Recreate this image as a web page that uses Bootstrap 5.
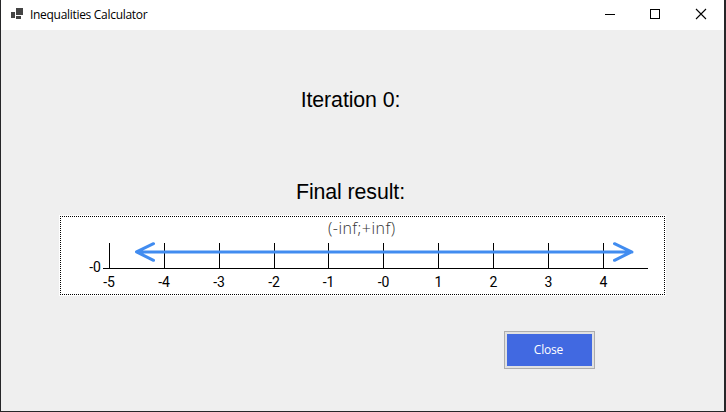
<!DOCTYPE html>
<html lang="en">
<head>
<meta charset="utf-8">
<title>Inequalities Calculator</title>
<link href="https://cdn.jsdelivr.net/npm/bootstrap@5.3.0/dist/css/bootstrap.min.css" rel="stylesheet">
<style>
  body { background: #262628; font-family: "Open Sans", sans-serif; color: #000; }
  .app-window { height: 411px; margin: 0 2px 0 1px; background: #efefef; }
  .title-bar { height: 30px; font-size: 12px; padding-left: 10px; }
  .title-text { margin-left: 6px; line-height: 30px; letter-spacing: -.3px; }
  .win-btn { width: 45.5px; height: 30px; }
  .win-btns { margin-right: 1px; }
  .step-heading { font: 21.33px/26px "Liberation Sans", Arial, sans-serif; width: 699px; letter-spacing: -.1px; }
  .step-one { padding-top: 57px; }
  .step-final { padding-top: 66px; }
  .chart-box { width: 607px; height: 81px; margin: 10px 0 0 58px; }
  .axis-labels { font: 14px Roboto, sans-serif; }
  .range-label { font: 300 16px "Open Sans", sans-serif; fill: #333; }
  .btn-close-form {
    width: 91px; height: 38px; margin: 35px 0 0 503px; padding: 0 2px 0 0;
    border: 1px solid #adadad; border-radius: 0; background: #4169e1;
    box-shadow: inset 0 0 0 2px #e1e1e1; color: #fff; font-size: 12px; letter-spacing: -.2px;
  }
  .btn-close-form:hover { background: #4169e1; color: #fff; border-color: #adadad; }
</style>
<script src="https://cdn.jsdelivr.net/npm/bootstrap@5.3.0/dist/js/bootstrap.bundle.min.js"></script>
</head>
<body class="overflow-hidden">
<div class="app-window d-flex flex-column">
  <header class="title-bar bg-white d-flex align-items-start flex-shrink-0">
    <svg width="13" height="30" shape-rendering="crispEdges" fill="#444"><path d="M0 12h4v6H0zM5 8h7v7H5zM5 16h5v3H5z"/></svg>
    <span class="title-text">Inequalities Calculator</span>
    <div class="win-btns d-flex ms-auto">
      <svg class="win-btn" viewBox="0 0 45.5 30"><path d="M18 14.5h10" stroke="#000" shape-rendering="crispEdges"/></svg>
      <svg class="win-btn" viewBox="0 0 45.5 30"><path d="M18.5 9.5h9v9h-9z" fill="none" stroke="#000" shape-rendering="crispEdges"/></svg>
      <svg class="win-btn" viewBox="0 0 45.5 30"><path d="M18 9l10 10M28 9l-10 10" stroke="#000" stroke-width="1.1"/></svg>
    </div>
  </header>
  <main>
    <h1 class="step-heading step-one text-center mb-0">Iteration 0:</h1>
    <h2 class="step-heading step-final text-center mb-0">Final result:</h2>
    <svg class="chart-box d-block" viewBox="59 215 607 81">
      <path fill="#fff" d="M59 215h607v81H59z"/>
      <g stroke="#000" stroke-dasharray="1 1" fill="none" shape-rendering="crispEdges">
        <path d="M60 216.5h605M60 294.5h605M60.5 216v79M664.5 216v79"/>
      </g>
      <path stroke="#000" fill="none" shape-rendering="crispEdges" d="M103 268.5h545M109.5 243v26M164.5 243v26M219.5 243v26M274.5 243v26M328.5 243v26M383.5 243v26M438.5 243v26M493.5 243v26M548.5 243v26M603.5 243v26"/>
      <path stroke="#418cf0" stroke-width="3" stroke-linecap="round" stroke-linejoin="round" fill="none" d="M137 251.9h495M153.5 243.7l-17 8.2 17 8.4M614.5 243.7l17 8.2-17 8.4"/>
      <g class="axis-labels" text-anchor="middle">
        <text x="95" y="272">-0</text>
        <text x="109" y="287">-5</text>
        <text x="164" y="287">-4</text>
        <text x="219" y="287">-3</text>
        <text x="274" y="287">-2</text>
        <text x="328.5" y="287">-1</text>
        <text x="383.5" y="287">-0</text>
        <text x="438.5" y="287">1</text>
        <text x="493.5" y="287">2</text>
        <text x="548.5" y="287">3</text>
        <text x="603.5" y="287">4</text>
      </g>
      <text class="range-label" x="328" y="234" textLength="67">(-inf;+inf)</text>
    </svg>
    <button type="button" class="btn btn-close-form d-block">Close</button>
  </main>
</div>
</body>
</html>
